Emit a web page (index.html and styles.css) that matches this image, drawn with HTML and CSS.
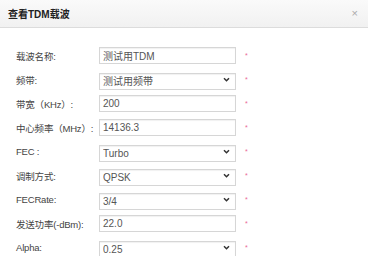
FILE: index.html
```html
<!DOCTYPE html>
<html lang="zh-CN">
<head>
    <meta charset="UTF-8">
    <title>查看TDM载波</title>
    <link rel="stylesheet" href="styles.css">
</head>
<body>
    <div class="modal">
        <div class="modal-header">
            <h3>查看TDM载波</h3>
            <span class="close">&times;</span>
        </div>

        <form class="modal-body">
            <div class="row">
                <label>载波名称:</label>
                <input type="text" value="测试用TDM" readonly>
                <span class="req">*</span>
            </div>
            <div class="row">
                <label>频带:</label>
                <div class="select">
                    <select><option>测试用频带</option></select>
                    <svg viewBox="0 0 8 6"><path d="M1 1.5 L4 4.5 L7 1.5" /></svg>
                </div>
                <span class="req">*</span>
            </div>
            <div class="row">
                <label>带宽（KHz）:</label>
                <input type="text" value="200" readonly>
                <span class="req">*</span>
            </div>
            <div class="row">
                <label>中心频率（MHz）:</label>
                <input type="text" value="14136.3" readonly>
                <span class="req">*</span>
            </div>
            <div class="row">
                <label>FEC :</label>
                <div class="select">
                    <select><option>Turbo</option></select>
                    <svg viewBox="0 0 8 6"><path d="M1 1.5 L4 4.5 L7 1.5" /></svg>
                </div>
                <span class="req">*</span>
            </div>
            <div class="row">
                <label>调制方式:</label>
                <div class="select">
                    <select><option>QPSK</option></select>
                    <svg viewBox="0 0 8 6"><path d="M1 1.5 L4 4.5 L7 1.5" /></svg>
                </div>
                <span class="req">*</span>
            </div>
            <div class="row">
                <label>FECRate:</label>
                <div class="select">
                    <select><option>3/4</option></select>
                    <svg viewBox="0 0 8 6"><path d="M1 1.5 L4 4.5 L7 1.5" /></svg>
                </div>
                <span class="req">*</span>
            </div>
            <div class="row">
                <label>发送功率(-dBm):</label>
                <input type="text" value="22.0" readonly>
                <span class="req">*</span>
            </div>
            <div class="row">
                <label>Alpha:</label>
                <div class="select">
                    <select><option>0.25</option></select>
                    <svg viewBox="0 0 8 6"><path d="M1 1.5 L4 4.5 L7 1.5" /></svg>
                </div>
                <span class="req">*</span>
            </div>
        </form>
    </div>
</body>
</html>
```

FILE: styles.css
```css
/* Reset */
body {
    margin: 0;
    padding: 0;
    background-color: #fff;
    font-family: 'Liberation Sans', 'Noto Sans CJK SC', sans-serif;
    color: #333;
}

/* Cabecera del modal */
.modal-header {
    height: 27px;
    display: flex;
    align-items: center;
    justify-content: space-between;
    padding: 0 10px 0 8px;
    background: linear-gradient(to bottom, #fafafa 0%, #f1f1f1 100%);
    border-bottom: 1px solid #dcdcdc;
}

.modal-header h3 {
    margin: 0;
    font-size: 10px;
    font-weight: bold;
    color: #222;
}

.close {
    font-size: 11px;
    color: #aaa;
    line-height: 1;
}

/* Cuerpo del formulario */
.modal-body {
    padding: 19px 0 0 16px;
    display: flex;
    flex-direction: column;
    gap: 7px;
}

.row {
    display: flex;
    align-items: center;
    height: 17px;
}

.row label {
    flex-shrink: 0;
    width: 83px;
    font-size: 9.5px;
    color: #444;
    white-space: nowrap;
    letter-spacing: -0.2px;
}

.row input,
.row select {
    box-sizing: border-box;
    width: 137px;
    height: 17px;
    margin: 0;
    padding: 0 3px;
    border: 1px solid #d6d6d6;
    border-radius: 0;
    box-shadow: inset 0 1px 1px rgba(0, 0, 0, 0.06);
    background-color: #fff;
    font-family: 'Liberation Sans', 'Noto Sans CJK SC', sans-serif;
    font-size: 10px;
    color: #555;
    outline: none;
}

.select {
    position: relative;
    width: 137px;
    height: 17px;
}

.select select {
    -webkit-appearance: none;
    appearance: none;
}

.select svg {
    position: absolute;
    right: 6px;
    top: 6px;
    width: 7px;
    height: 5px;
    fill: none;
    stroke: #333;
    stroke-width: 1.8;
}

.req {
    margin-left: 9px;
    font-size: 7px;
    color: #ea6a95;
    line-height: 1;
}
```
